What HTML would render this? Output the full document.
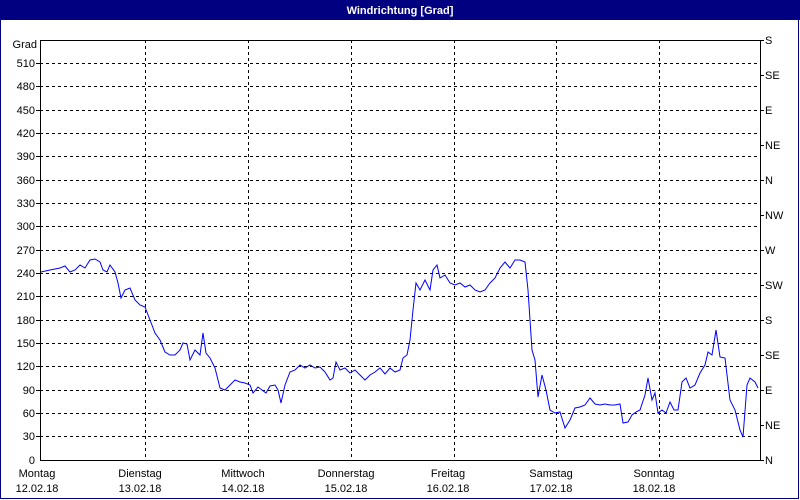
<!DOCTYPE html>
<html><head><meta charset="utf-8"><style>
html,body{margin:0;padding:0;width:800px;height:500px;overflow:hidden;background:#fff}
svg{display:block}
text{font-family:"Liberation Sans",sans-serif;font-size:11px;fill:#000}
</style></head><body>
<svg width="800" height="500" xmlns="http://www.w3.org/2000/svg">
<rect x="0" y="0" width="800" height="500" fill="#fff"/>
<rect x="0" y="0" width="800" height="20" fill="#000080"/>
<rect x="0.5" y="0.5" width="798" height="498" fill="none" stroke="#000080"/>
<text x="400" y="14" text-anchor="middle" fill="#fff" style="fill:#fff;font-weight:bold">Windrichtung [Grad]</text>
<g stroke="#000" stroke-dasharray="3,3" stroke-width="1">
<line x1="40" y1="63.5" x2="760" y2="63.5"/><line x1="40" y1="86.5" x2="760" y2="86.5"/><line x1="40" y1="110.5" x2="760" y2="110.5"/><line x1="40" y1="133.5" x2="760" y2="133.5"/><line x1="40" y1="156.5" x2="760" y2="156.5"/><line x1="40" y1="180.5" x2="760" y2="180.5"/><line x1="40" y1="203.5" x2="760" y2="203.5"/><line x1="40" y1="226.5" x2="760" y2="226.5"/><line x1="40" y1="250.5" x2="760" y2="250.5"/><line x1="40" y1="273.5" x2="760" y2="273.5"/><line x1="40" y1="296.5" x2="760" y2="296.5"/><line x1="40" y1="320.5" x2="760" y2="320.5"/><line x1="40" y1="343.5" x2="760" y2="343.5"/><line x1="40" y1="366.5" x2="760" y2="366.5"/><line x1="40" y1="390.5" x2="760" y2="390.5"/><line x1="40" y1="413.5" x2="760" y2="413.5"/><line x1="40" y1="436.5" x2="760" y2="436.5"/>
<line x1="145.5" y1="40" x2="145.5" y2="460"/><line x1="248.5" y1="40" x2="248.5" y2="460"/><line x1="351.5" y1="40" x2="351.5" y2="460"/><line x1="454.5" y1="40" x2="454.5" y2="460"/><line x1="556.5" y1="40" x2="556.5" y2="460"/><line x1="659.5" y1="40" x2="659.5" y2="460"/>
</g>
<rect x="40.5" y="40.5" width="720" height="420" fill="none" stroke="#000"/>
<g stroke="#000"><line x1="36" y1="63.5" x2="40" y2="63.5"/><line x1="36" y1="86.5" x2="40" y2="86.5"/><line x1="36" y1="110.5" x2="40" y2="110.5"/><line x1="36" y1="133.5" x2="40" y2="133.5"/><line x1="36" y1="156.5" x2="40" y2="156.5"/><line x1="36" y1="180.5" x2="40" y2="180.5"/><line x1="36" y1="203.5" x2="40" y2="203.5"/><line x1="36" y1="226.5" x2="40" y2="226.5"/><line x1="36" y1="250.5" x2="40" y2="250.5"/><line x1="36" y1="273.5" x2="40" y2="273.5"/><line x1="36" y1="296.5" x2="40" y2="296.5"/><line x1="36" y1="320.5" x2="40" y2="320.5"/><line x1="36" y1="343.5" x2="40" y2="343.5"/><line x1="36" y1="366.5" x2="40" y2="366.5"/><line x1="36" y1="390.5" x2="40" y2="390.5"/><line x1="36" y1="413.5" x2="40" y2="413.5"/><line x1="36" y1="436.5" x2="40" y2="436.5"/>
<line x1="760" y1="75.5" x2="764" y2="75.5"/><line x1="760" y1="110.5" x2="764" y2="110.5"/><line x1="760" y1="145.5" x2="764" y2="145.5"/><line x1="760" y1="180.5" x2="764" y2="180.5"/><line x1="760" y1="215.5" x2="764" y2="215.5"/><line x1="760" y1="250.5" x2="764" y2="250.5"/><line x1="760" y1="285.5" x2="764" y2="285.5"/><line x1="760" y1="320.5" x2="764" y2="320.5"/><line x1="760" y1="355.5" x2="764" y2="355.5"/><line x1="760" y1="390.5" x2="764" y2="390.5"/><line x1="760" y1="425.5" x2="764" y2="425.5"/><line x1="760" y1="40.5" x2="764" y2="40.5"/><line x1="760" y1="460.5" x2="764" y2="460.5"/></g>
<g text-anchor="end">
<text x="37" y="48">Grad</text><text x="35" y="67">510</text><text x="35" y="90">480</text><text x="35" y="114">450</text><text x="35" y="137">420</text><text x="35" y="160">390</text><text x="35" y="184">360</text><text x="35" y="207">330</text><text x="35" y="230">300</text><text x="35" y="254">270</text><text x="35" y="277">240</text><text x="35" y="300">210</text><text x="35" y="324">180</text><text x="35" y="347">150</text><text x="35" y="370">120</text><text x="35" y="394">90</text><text x="35" y="417">60</text><text x="35" y="440">30</text><text x="35" y="464">0</text>
</g>
<g>
<text x="765" y="44">S</text><text x="765" y="79">SE</text><text x="765" y="114">E</text><text x="765" y="149">NE</text><text x="765" y="184">N</text><text x="765" y="219">NW</text><text x="765" y="254">W</text><text x="765" y="289">SW</text><text x="765" y="324">S</text><text x="765" y="359">SE</text><text x="765" y="394">E</text><text x="765" y="429">NE</text><text x="765" y="464">N</text>
</g>
<g text-anchor="middle">
<text x="37" y="477">Montag</text><text x="37" y="492">12.02.18</text>
<text x="140" y="477">Dienstag</text><text x="140" y="492">13.02.18</text>
<text x="243" y="477">Mittwoch</text><text x="243" y="492">14.02.18</text>
<text x="346" y="477">Donnerstag</text><text x="346" y="492">15.02.18</text>
<text x="448" y="477">Freitag</text><text x="448" y="492">16.02.18</text>
<text x="551" y="477">Samstag</text><text x="551" y="492">17.02.18</text>
<text x="654" y="477">Sonntag</text><text x="654" y="492">18.02.18</text>
</g>
<polyline fill="none" stroke="#0000ff" stroke-width="1" points="41,272 50,270 60,268 65,266 70,272 75,270 80,265 85,268 90,260 95,259 100,262 103,270 107,272 110,265 115,272 118,283 121,298 125,290 130,288 135,300 140,305 145,307 150,320 155,333 160,340 165,352 170,355 175,355 180,350 183,343 187,344 190,360 195,350 200,355 203,333 206,353 210,358 215,368 220,388 225,390 230,385 235,380 240,382 245,383 250,385 253,393 258,387 262,390 266,393 270,386 275,385 278,390 281,403 285,385 290,372 295,370 300,365 305,368 310,365 315,368 320,367 325,372 330,380 333,378 336,362 340,370 345,368 350,373 355,370 360,375 365,380 370,375 375,372 380,368 385,374 390,368 395,372 400,370 403,358 407,355 410,340 413,310 416,283 420,290 425,280 430,290 433,270 437,265 440,278 445,275 450,283 455,285 460,283 465,287 470,285 475,290 480,292 485,290 490,283 495,278 500,268 505,262 510,268 515,260 520,260 525,262 528,290 532,350 535,360 538,397 542,375 546,390 550,410 555,413 560,412 565,428 570,420 575,408 580,407 585,405 590,398 595,404 600,405 605,404 610,405 615,405 620,404 623,423 628,422 632,415 636,412 640,410 645,395 648,378 652,400 655,393 658,413 662,410 666,413 670,402 674,410 678,410 682,382 686,378 690,388 695,385 700,373 705,365 708,352 712,355 716,330 720,357 725,358 730,400 735,410 740,430 743,437 747,385 750,378 755,382 758,388"/>
</svg>
</body></html>
